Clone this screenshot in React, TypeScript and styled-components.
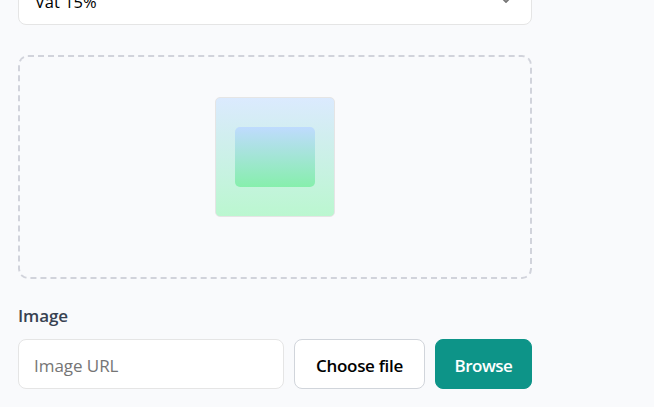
import React from "react";
import styled, { createGlobalStyle } from "styled-components";

const GlobalStyle = createGlobalStyle`
  *, *::before, *::after { box-sizing: border-box; }
  html, body { margin: 0; background: #f9fafc; overflow: hidden; }
  body { font-family: "Segoe UI", "Open Sans", "Noto Sans", sans-serif; font-size: 17px; line-height: 24px; color: #000; }
  input, button { font: inherit; }
`;

const Page = styled.main`
  height: 407px;
  padding-left: 18px;
  overflow: hidden;
`;

const Form = styled.form`
  display: flex;
  flex-direction: column;
  width: 514px;
`;

const Select = styled.div`
  display: flex;
  align-items: center;
  justify-content: space-between;
  flex: none;
  height: 50px;
  margin-top: -25px;
  padding: 3px 20px 0 16px;
  border: 1px solid #e5e5e5;
  border-radius: 8px;
  background: #fff;

  svg {
    margin-bottom: 3px;
  }
`;

const SelectText = styled.span`
  font-size: 16.5px;
  letter-spacing: 0;
`;

const DropZone = styled.div`
  display: flex;
  justify-content: center;
  height: 224px;
  margin-top: 30px;
  padding-top: 40px;
  border: 2px dashed #d1d3db;
  border-radius: 10px;
`;

const Preview = styled.div`
  display: flex;
  flex: none;
  width: 120px;
  height: 120px;
  padding: 29px 19px;
  border: 1px solid #e5e5e5;
  border-radius: 5px;
  background: linear-gradient(#dbeafe, #bbf7d0);
`;

const PreviewInner = styled.div`
  width: 80px;
  height: 60px;
  border-radius: 5px;
  background: linear-gradient(#bfdbfe, #86efac);
`;

const Label = styled.label`
  margin-top: 25px;
  color: #374151;
  font-size: 17px;
  font-weight: 600;
  letter-spacing: -0.1px;
`;

const Row = styled.div`
  display: grid;
  grid-template-columns: 266px 131px 97px;
  gap: 10px;
  height: 50px;
  margin-top: 11px;
`;

const UrlInput = styled.input`
  min-width: 0;
  padding: 3px 15px 0;
  border: 1px solid #e5e5e5;
  border-radius: 8px;
  background: #fff;
  outline: none;
  font-size: 17px;
  letter-spacing: -0.05px;
  &::placeholder { color: #757575; opacity: 1; }
`;

const Button = styled.button<{ $primary?: boolean }>`
  padding: 3px 0 0;
  border: 1px solid ${(p) => (p.$primary ? "#0d9488" : "#d1d5db")};
  border-radius: 8px;
  background: ${(p) => (p.$primary ? "#0d9488" : "#fff")};
  color: ${(p) => (p.$primary ? "#fff" : "#000")};
  font-size: 17px;
  font-weight: 600;
  letter-spacing: ${(p) => (p.$primary ? "-0.5px" : "-0.3px")};
  white-space: nowrap;
`;

export default function App() {
  return (
    <>
      <GlobalStyle />
      <Page>
        <Form>
          <Select>
            <SelectText>Vat 15%</SelectText>
            <svg width="10" height="6" viewBox="0 0 10 6" fill="none" stroke="#757575" strokeWidth="1.8">
              <path d="M1 1l4 4 4-4" />
            </svg>
          </Select>
          <DropZone>
            <Preview>
              <PreviewInner />
            </Preview>
          </DropZone>
          <Label htmlFor="image-url">Image</Label>
          <Row>
            <UrlInput id="image-url" placeholder="Image URL" />
            <Button type="button">Choose file</Button>
            <Button type="button" $primary>Browse</Button>
          </Row>
        </Form>
      </Page>
    </>
  );
}
